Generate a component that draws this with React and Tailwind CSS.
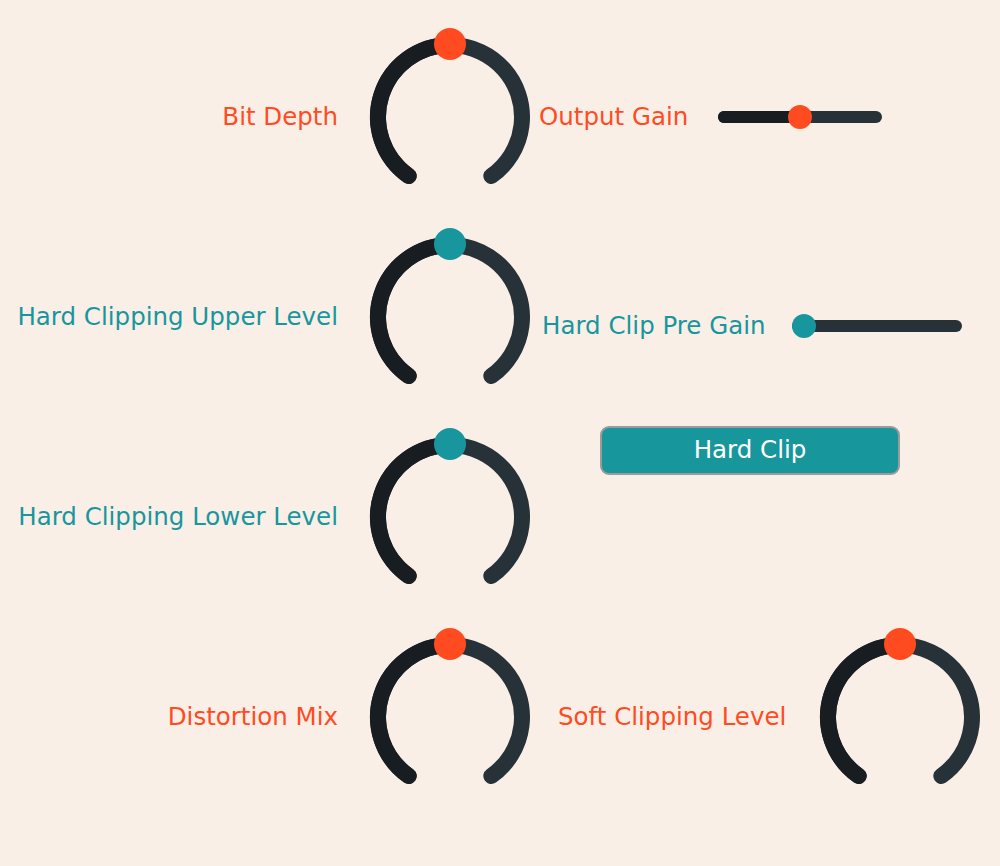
import React from 'react';

const ORANGE = '#ff4b1f';
const TEAL = '#18969d';

function Knob({ color }) {
  // 290° arc, value at the top (50%)
  return (
    <svg width="176" height="180" viewBox="0 -2 176 180" className="shrink-0">
      <path
        d="M 46.7 147 A 72 72 0 1 1 129.3 147"
        fill="none"
        stroke="#263238"
        strokeWidth="16"
        strokeLinecap="round"
      />
      <path
        d="M 46.7 147 A 72 72 0 0 1 88 16"
        fill="none"
        stroke="#171d20"
        strokeWidth="16"
        strokeLinecap="round"
      />
      <circle cx="88" cy="15" r="16" fill={color} />
    </svg>
  );
}

function Slider({ width, value, color }) {
  return (
    <div className="relative h-[12px] rounded-full bg-[#263238]" style={{ width }}>
      <div className="h-full rounded-full bg-[#171d20]" style={{ width: `${value * 100}%` }} />
      <div
        className="absolute top-1/2 h-[24px] w-[24px] -translate-y-1/2 rounded-full"
        style={{ left: `calc(${value} * (100% - 24px))`, backgroundColor: color }}
      />
    </div>
  );
}

export default function App() {
  return (
    <div className="min-h-screen w-full bg-[#faefe7] pt-[17px] font-['DejaVu_Sans',sans-serif] text-[24.5px]">
      <div className="flex h-[200px] items-center">
        <div className="w-[338px] text-right text-[#ff4b1f]">Bit Depth</div>
        <div className="ml-[24px]">
          <Knob color={ORANGE} />
        </div>
        <div className="ml-[1px] w-[179px] text-[#ff4b1f]">Output Gain</div>
        <Slider width={164} value={0.5} color={ORANGE} />
      </div>

      <div className="flex h-[200px] items-center">
        <div className="w-[338px] text-right text-[#18969d]">Hard Clipping Upper Level</div>
        <div className="ml-[24px]">
          <Knob color={TEAL} />
        </div>
        <div className="mt-[18px] ml-[4px] flex items-center">
          <div className="w-[250px] text-[#18969d]">Hard Clip Pre Gain</div>
          <Slider width={170} value={0} color={TEAL} />
        </div>
      </div>

      <div className="flex h-[200px] items-center">
        <div className="w-[338px] text-right text-[#18969d]">Hard Clipping Lower Level</div>
        <div className="ml-[24px]">
          <Knob color={TEAL} />
        </div>
        <button className="ml-[62px] mt-[9px] h-[49px] w-[300px] self-start rounded-[9px] border-2 border-[#9b9b9b] bg-[#17969c] text-white">
          Hard Clip
        </button>
      </div>

      <div className="flex h-[200px] items-center">
        <div className="w-[338px] text-right text-[#ff4b1f]">Distortion Mix</div>
        <div className="ml-[24px]">
          <Knob color={ORANGE} />
        </div>
        <div className="ml-[20px] w-[254px] text-[#ff4b1f]">Soft Clipping Level</div>
        <Knob color={ORANGE} />
      </div>
    </div>
  );
}
